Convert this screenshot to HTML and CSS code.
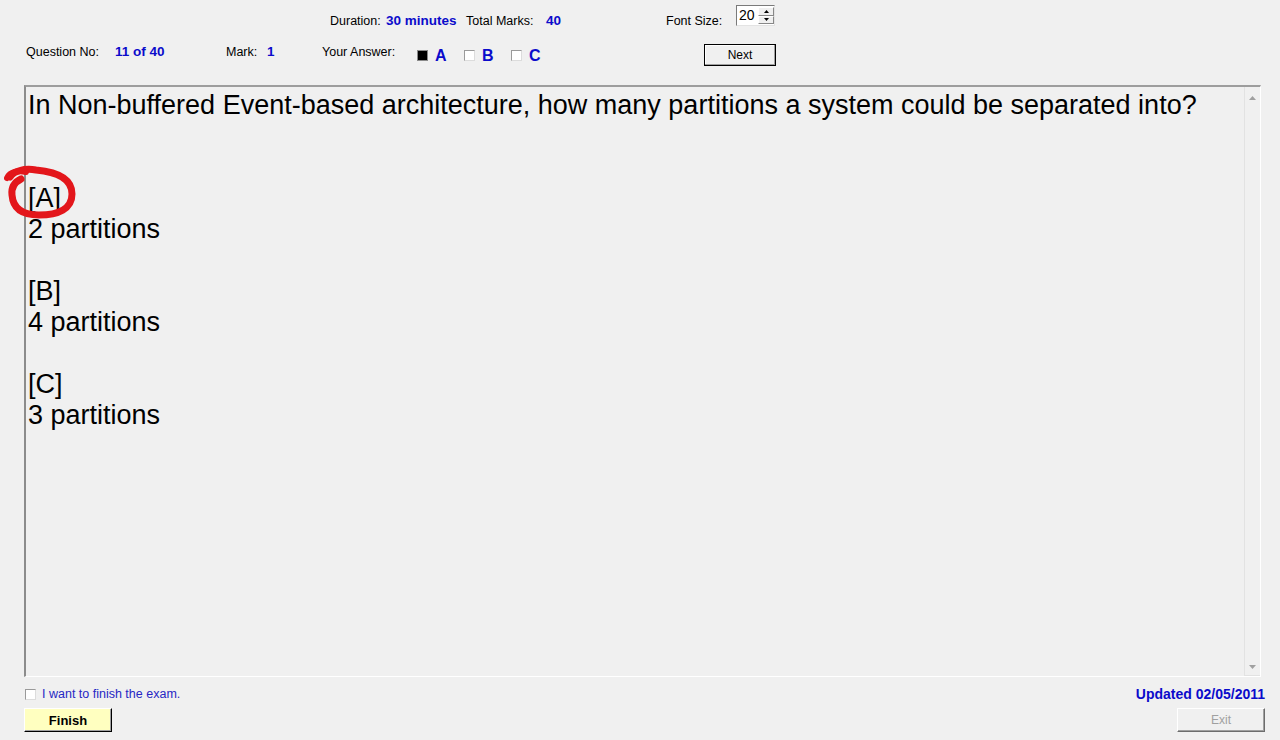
FILE: index.html
```html
<!DOCTYPE html>
<html>
<head>
<meta charset="utf-8">
<title>Exam</title>
<link rel="stylesheet" href="styles.css">
</head>
<body>
<div class="app">
  <div class="row1">
    <span class="lbl w-dur">Duration:</span>
    <span class="val w-durv">30 minutes</span>
    <span class="lbl w-tot">Total Marks:</span>
    <span class="val w-totv">40</span>
    <span class="lbl w-font">Font Size:</span>
    <div class="spin">
      <span class="spin-val">20</span>
      <div class="spin-btns">
        <span class="spin-btn"><svg width="5" height="3" viewBox="0 0 5 3"><path d="M2.5 0 L5 3 L0 3Z" fill="#000"/></svg></span>
        <span class="spin-btn"><svg width="5" height="3" viewBox="0 0 5 3"><path d="M0 0 L5 0 L2.5 3Z" fill="#000"/></svg></span>
      </div>
    </div>
  </div>

  <div class="row2">
    <span class="lbl2 w-q">Question No:</span>
    <span class="val2 w-qv">11 of 40</span>
    <span class="lbl2 w-m">Mark:</span>
    <span class="val2 w-mv">1</span>
    <span class="lbl2 w-ya">Your Answer:</span>
    <span class="opt w-opt"><span class="cb cb-on"></span><span class="opt-l">A</span></span>
    <span class="opt w-opt"><span class="cb"></span><span class="opt-l">B</span></span>
    <span class="opt w-optc"><span class="cb"></span><span class="opt-l">C</span></span>
    <button class="btn-next">Next</button>
  </div>

  <div class="qbox">
    <div class="qtext">
      <div class="line">In Non-buffered Event-based architecture, how many partitions a system could be separated into?</div>
      <div class="line">&nbsp;</div>
      <div class="line">&nbsp;</div>
      <div class="line">[A]</div>
      <div class="line">2 partitions</div>
      <div class="line">&nbsp;</div>
      <div class="line">[B]</div>
      <div class="line">4 partitions</div>
      <div class="line">&nbsp;</div>
      <div class="line">[C]</div>
      <div class="line">3 partitions</div>
    </div>
    <div class="scroll">
      <svg class="arrow" width="7" height="4" viewBox="0 0 7 4"><path d="M3.5 0 L7 4 L0 4Z" fill="#a0a0a0"/></svg>
      <svg class="arrow" width="7" height="4" viewBox="0 0 7 4"><path d="M0 0 L7 0 L3.5 4Z" fill="#a0a0a0"/></svg>
    </div>
    <svg class="mark" width="90" height="70" viewBox="0 0 90 70">
      <path d="M6 13 C10 7 20 4 32 6 C54 8 68 15 68 30 C68 45 54 51 35 51 C18 51 9 44 8 31 C7 23 11 18 17 15" fill="none" stroke="#e3161b" stroke-width="7" stroke-linecap="round"/>
      <path d="M3 14 C6 8 14 6 22 8" fill="none" stroke="#e3161b" stroke-width="6" stroke-linecap="round"/>
    </svg>
  </div>

  <div class="row3">
    <label class="finish-chk"><span class="cb"></span><span>I want to finish the exam.</span></label>
    <span class="updated">Updated 02/05/2011</span>
  </div>

  <div class="row4">
    <button class="btn-finish">Finish</button>
    <button class="btn-exit">Exit</button>
  </div>
</div>
</body>
</html>
```

FILE: styles.css
```css
html, body {
  margin: 0;
  padding: 0;
  background: #f0f0f0;
  width: 1280px;
  height: 740px;
  overflow: hidden;
  font-family: "Liberation Sans", Arial, sans-serif;
}

.app {
  padding: 0 15px 0 24px;
  box-sizing: border-box;
  width: 1280px;
}

/* row 1 */
.row1 {
  display: flex;
  align-items: flex-start;
  padding-left: 306px;
  height: 44px;
}
.lbl {
  font-size: 12.5px;
  color: #000;
  margin-top: 14px;
  line-height: 15px;
}
.val {
  font-size: 13.5px;
  font-weight: bold;
  color: #0b0bcb;
  margin-top: 13px;
  line-height: 16px;
}
.w-dur { width: 56px; }
.w-durv { width: 80px; }
.w-tot { width: 80px; }
.w-totv { width: 120px; }
.w-font { width: 70px; }

.spin {
  margin-top: 5px;
  display: flex;
  width: 39px;
  height: 21px;
  box-sizing: border-box;
  border: 1px solid #7a7a7a;
  border-right-color: #e3e3e3;
  border-bottom-color: #e3e3e3;
  background: #fff;
}
.spin-val {
  font-size: 14px;
  line-height: 18px;
  padding-left: 2px;
  width: 20px;
  color: #000;
}
.spin-btns {
  display: flex;
  flex-direction: column;
  width: 16px;
  margin: 1px 0;
}
.spin-btn {
  flex: 1;
  display: flex;
  align-items: center;
  justify-content: center;
  background: #f0f0f0;
  border: 1px solid #fff;
  border-right-color: #888;
  border-bottom-color: #888;
  box-sizing: border-box;
}

/* row 2 */
.row2 {
  display: flex;
  align-items: center;
  height: 22px;
  padding-left: 2px;
}
.lbl2 {
  font-size: 12.5px;
  align-self: flex-start;
  line-height: 16px;
}
.val2 {
  font-size: 13.5px;
  font-weight: bold;
  color: #0b0bcb;
  align-self: flex-start;
  line-height: 16px;
}
.w-q { width: 89px; }
.w-qv { width: 111px; }
.w-m { width: 41px; }
.w-mv { width: 55px; }
.w-ya { width: 95px; }
.w-opt { width: 47px; }
.w-optc { width: 193px; }

.opt {
  display: flex;
  align-items: center;
}
.cb {
  display: inline-block;
  width: 11px;
  height: 11px;
  box-sizing: border-box;
  background: #fff;
  border: 1px solid #9a9a9a;
  border-right-color: #dcdcdc;
  border-bottom-color: #dcdcdc;
  flex: none;
}
.cb-on {
  background: #000;
  border: 1px solid #8a8a8a;
}
.opt-l {
  margin-left: 7px;
  font-size: 16px;
  font-weight: bold;
  color: #0b0bcb;
  line-height: 18px;
  margin-top: 2px;
}

.btn-next {
  width: 72px;
  height: 22px;
  box-sizing: border-box;
  border: 1px solid #000;
  background: #f0f0f0;
  box-shadow: inset -1px -1px 0 #a0a0a0, inset 1px 1px 0 #fff;
  font-family: "Liberation Sans", Arial, sans-serif;
  font-size: 12px;
  color: #000;
  padding: 0;
  border-radius: 0;
}

/* question box */
.qbox {
  position: relative;
  margin-top: 19px;
  width: 1237px;
  height: 592px;
  box-sizing: border-box;
  border-top: 2px solid #9d9d9d;
  border-left: 2px solid #8c8c8c;
  border-right: 1px solid #fff;
  border-bottom: 1px solid #fff;
  display: flex;
}
.qtext {
  flex: 1;
  padding: 3px 0 0 2px;
  font-size: 27px;
  line-height: 31px;
  color: #000;
}
.line {
  white-space: nowrap;
}
.scroll {
  width: 16px;
  border-left: 1px solid #e2e2e2;
  border-bottom: 1px solid #e2e2e2;
  display: flex;
  flex-direction: column;
  justify-content: space-between;
  align-items: center;
  padding: 9px 0 6px;
  box-sizing: border-box;
}
.arrow { display: block; }

.mark {
  position: absolute;
  left: -22px;
  top: 77px;
}

/* row 3 */
.row3 {
  display: flex;
  justify-content: space-between;
  align-items: center;
  margin-top: 8px;
  height: 18px;
}
.finish-chk {
  display: flex;
  align-items: center;
  font-size: 12.5px;
  color: #2727c4;
  padding-left: 1px;
}
.finish-chk .cb {
  margin-right: 6px;
}
.updated {
  font-size: 14px;
  font-weight: bold;
  color: #0b0bcb;
}

/* row 4 */
.row4 {
  display: flex;
  justify-content: space-between;
  margin-top: 5px;
}
.btn-finish,
.btn-exit {
  width: 88px;
  height: 24px;
  box-sizing: border-box;
  padding: 0;
  border-radius: 0;
  font-family: "Liberation Sans", Arial, sans-serif;
}
.btn-finish {
  background: #ffffc0;
  border: 1px solid #fff;
  border-right-color: #000;
  border-bottom-color: #000;
  box-shadow: inset -1px -1px 0 #a0a0a0;
  font-size: 13px;
  font-weight: bold;
  color: #000;
}
.btn-exit {
  background: #f0f0f0;
  border: 1px solid #fff;
  border-right-color: #6d6d6d;
  border-bottom-color: #6d6d6d;
  box-shadow: inset -1px -1px 0 #a0a0a0;
  font-size: 12px;
  color: #a0a0a0;
}
```
